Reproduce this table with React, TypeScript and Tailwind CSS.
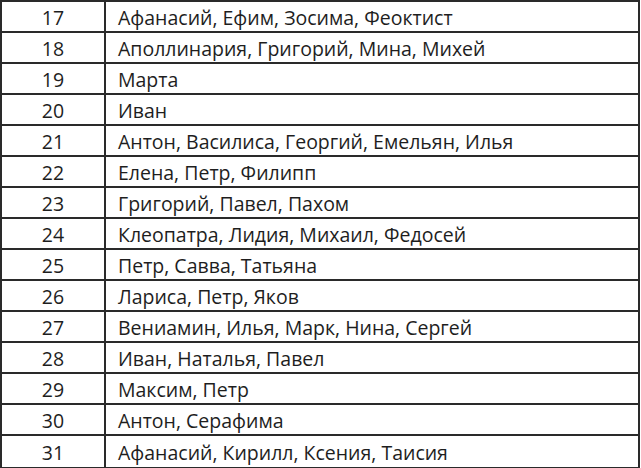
const rows: [number, string][] = [
  [17, "Афанасий, Ефим, Зосима, Феоктист"],
  [18, "Аполлинария, Григорий, Мина, Михей"],
  [19, "Марта"],
  [20, "Иван"],
  [21, "Антон, Василиса, Георгий, Емельян, Илья"],
  [22, "Елена, Петр, Филипп"],
  [23, "Григорий, Павел, Пахом"],
  [24, "Клеопатра, Лидия, Михаил, Федосей"],
  [25, "Петр, Савва, Татьяна"],
  [26, "Лариса, Петр, Яков"],
  [27, "Вениамин, Илья, Марк, Нина, Сергей"],
  [28, "Иван, Наталья, Павел"],
  [29, "Максим, Петр"],
  [30, "Антон, Серафима"],
  [31, "Афанасий, Кирилл, Ксения, Таисия"],
];

export default function App() {
  return (
    <div className="w-[641px] h-[468px] bg-white">
      <div
        className="w-[640px] border-2 border-[#2a2a2a] text-[#1e1e1e] text-[19.5px]"
        style={{ fontFamily: '"Open Sans", "Noto Sans", sans-serif' }}
      >
        {rows.map(([day, names], i) => (
          <div
            key={day}
            className={`flex h-[31px] ${i < rows.length - 1 ? "border-b-2 border-[#2a2a2a]" : "h-[29px]"}`}
          >
            <div className="w-[104px] border-r-2 border-[#2a2a2a] flex items-center justify-center pt-[3px]">
              {day}
            </div>
            <div className="flex-1 flex items-center pl-[12px] pt-[3px]">{names}</div>
          </div>
        ))}
      </div>
    </div>
  );
}
